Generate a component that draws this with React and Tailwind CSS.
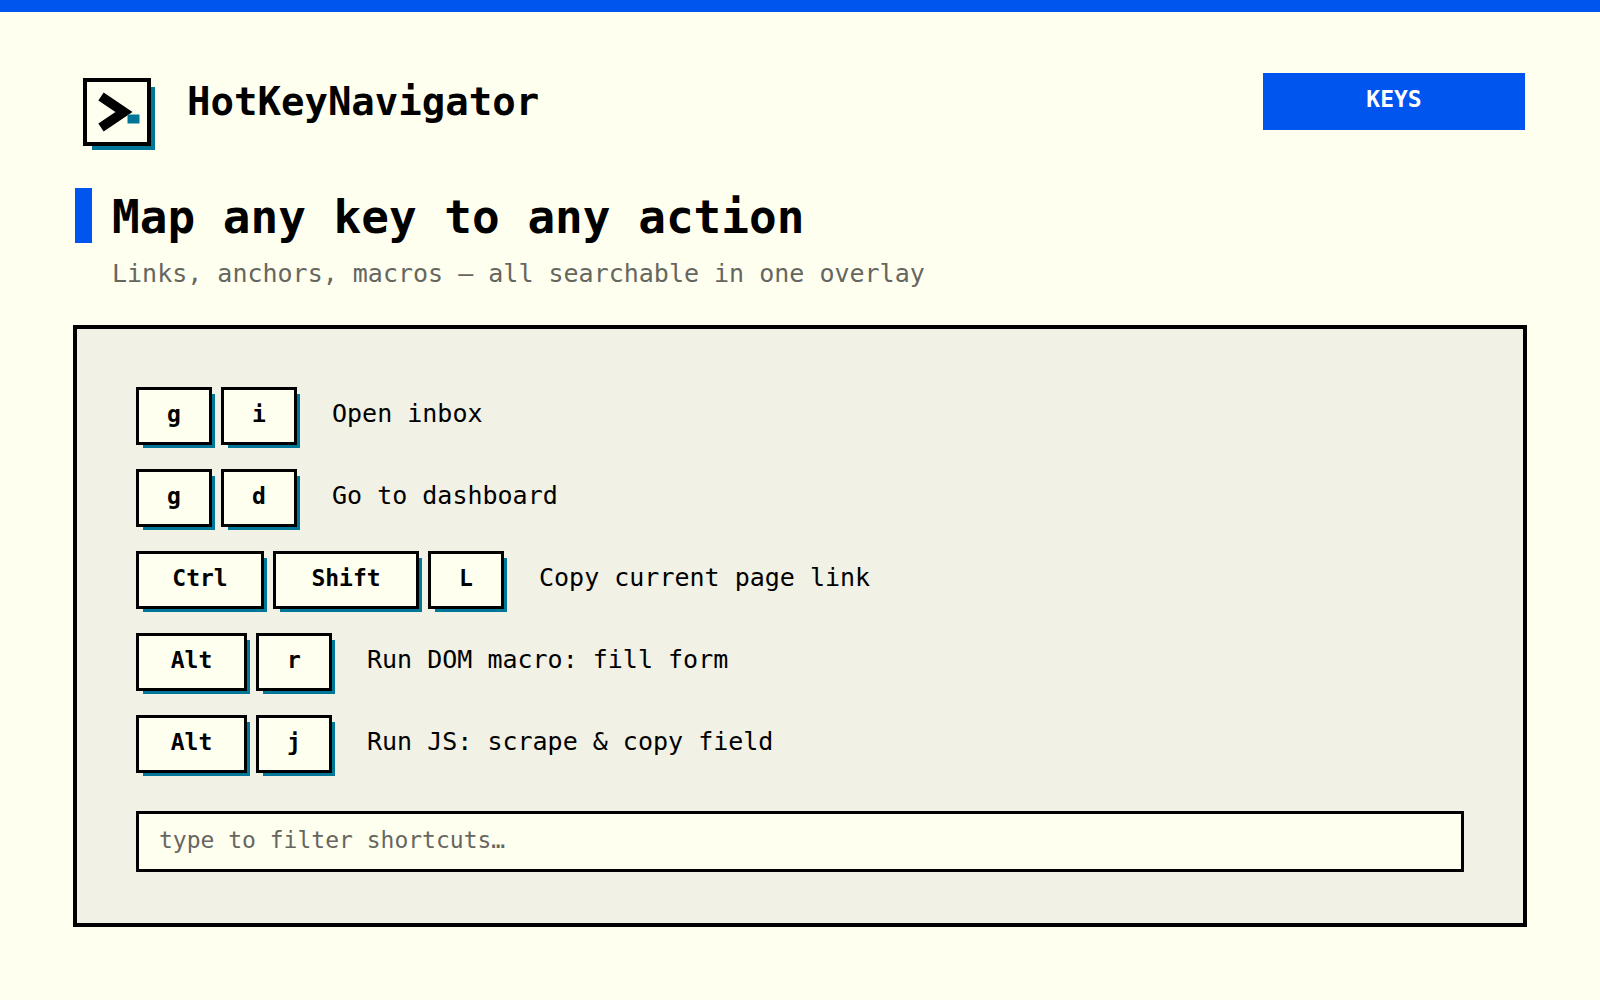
import React from "react";

const shortcuts = [
	{
		keys: [
			{ name: "g", width: "w-[76px]" },
			{ name: "i", width: "w-[76px]" },
		],
		action: "Open inbox",
	},
	{
		keys: [
			{ name: "g", width: "w-[76px]" },
			{ name: "d", width: "w-[76px]" },
		],
		action: "Go to dashboard",
	},
	{
		keys: [
			{ name: "Ctrl", width: "w-32" },
			{ name: "Shift", width: "w-[146px]" },
			{ name: "L", width: "w-[76px]" },
		],
		action: "Copy current page link",
	},
	{
		keys: [
			{ name: "Alt", width: "w-[111px]" },
			{ name: "r", width: "w-[76px]" },
		],
		action: "Run DOM macro: fill form",
	},
	{
		keys: [
			{ name: "Alt", width: "w-[111px]" },
			{ name: "j", width: "w-[76px]" },
		],
		action: "Run JS: scrape & copy field",
	},
];

const Logo = () => {
	return (
		<svg className="h-[72px] w-[72px] shrink-0" viewBox="0 0 72 72" aria-hidden="true">
			<rect x="9" y="9" width="63" height="63" fill="#007799" />
			<rect x="2" y="2" width="64" height="64" fill="#fffff0" stroke="#000" strokeWidth="4" />
			<path d="M18 18.5 L41 34 L18 49.5" fill="none" stroke="#000" strokeWidth="9.5" />
			<rect x="44.5" y="36.5" width="12" height="9" fill="#007799" />
		</svg>
	);
};

const Key = ({ name, width }) => {
	return (
		<kbd
			className={`${width} h-[58px] border-[3px] border-black bg-[#fffff0] text-center font-[DejaVu_Sans_Mono,monospace] text-[23px] leading-[48px] font-bold shadow-[5px_5px_0_-2px_#007799]`}
		>
			{name}
		</kbd>
	);
};

const ShortcutRow = ({ shortcut }) => {
	return (
		<li className="flex items-start gap-[35px]">
			<div className="flex gap-[9px]">
				{shortcut.keys.map((key) => (
					<Key key={key.name} name={key.name} width={key.width} />
				))}
			</div>
			<span className="text-[25px] leading-[54px]">{shortcut.action}</span>
		</li>
	);
};

const App = () => {
	return (
		<div className="min-h-screen border-t-12 border-[#0055ee] bg-[#fffff0] px-[73px] pt-[61px] pb-[73px] font-[DejaVu_Sans_Mono,monospace] text-black">
			<header className="flex items-start justify-between px-0.5">
				<div className="flex items-start gap-8 pt-[5px] pl-2">
					<Logo />
					<span className="text-[39px] leading-[48px] font-bold">HotKeyNavigator</span>
				</div>
				<button
					type="button"
					className="h-[57px] w-[262px] bg-[#0055ee] pb-1 text-[23px] font-bold text-white"
				>
					KEYS
				</button>
			</header>

			<div className="mt-[38px] flex items-start gap-5 px-0.5">
				<div className="h-[55px] w-[17px] shrink-0 bg-[#0055ee]" />
				<div>
					<h1 className="text-[46px] leading-[58px] font-bold">Map any key to any action</h1>
					<p className="text-[25px] leading-[56px] text-[#666660]">
						Links, anchors, macros — all searchable in one overlay
					</p>
				</div>
			</div>

			<main className="mt-[23px] border-4 border-black bg-[#f1f1e6] px-[59px] pt-[58px] pb-[51px]">
				<ul className="flex flex-col gap-6">
					{shortcuts.map((shortcut) => (
						<ShortcutRow key={shortcut.action} shortcut={shortcut} />
					))}
				</ul>
				<input
					type="text"
					aria-label="Filter shortcuts"
					placeholder="type to filter shortcuts…"
					className="mt-[38px] block h-[61px] w-full border-[3px] border-black bg-[#fffff0] px-5 pb-1 text-[23px] outline-none placeholder:text-[#666660]"
				/>
			</main>
		</div>
	);
};

export default App;
